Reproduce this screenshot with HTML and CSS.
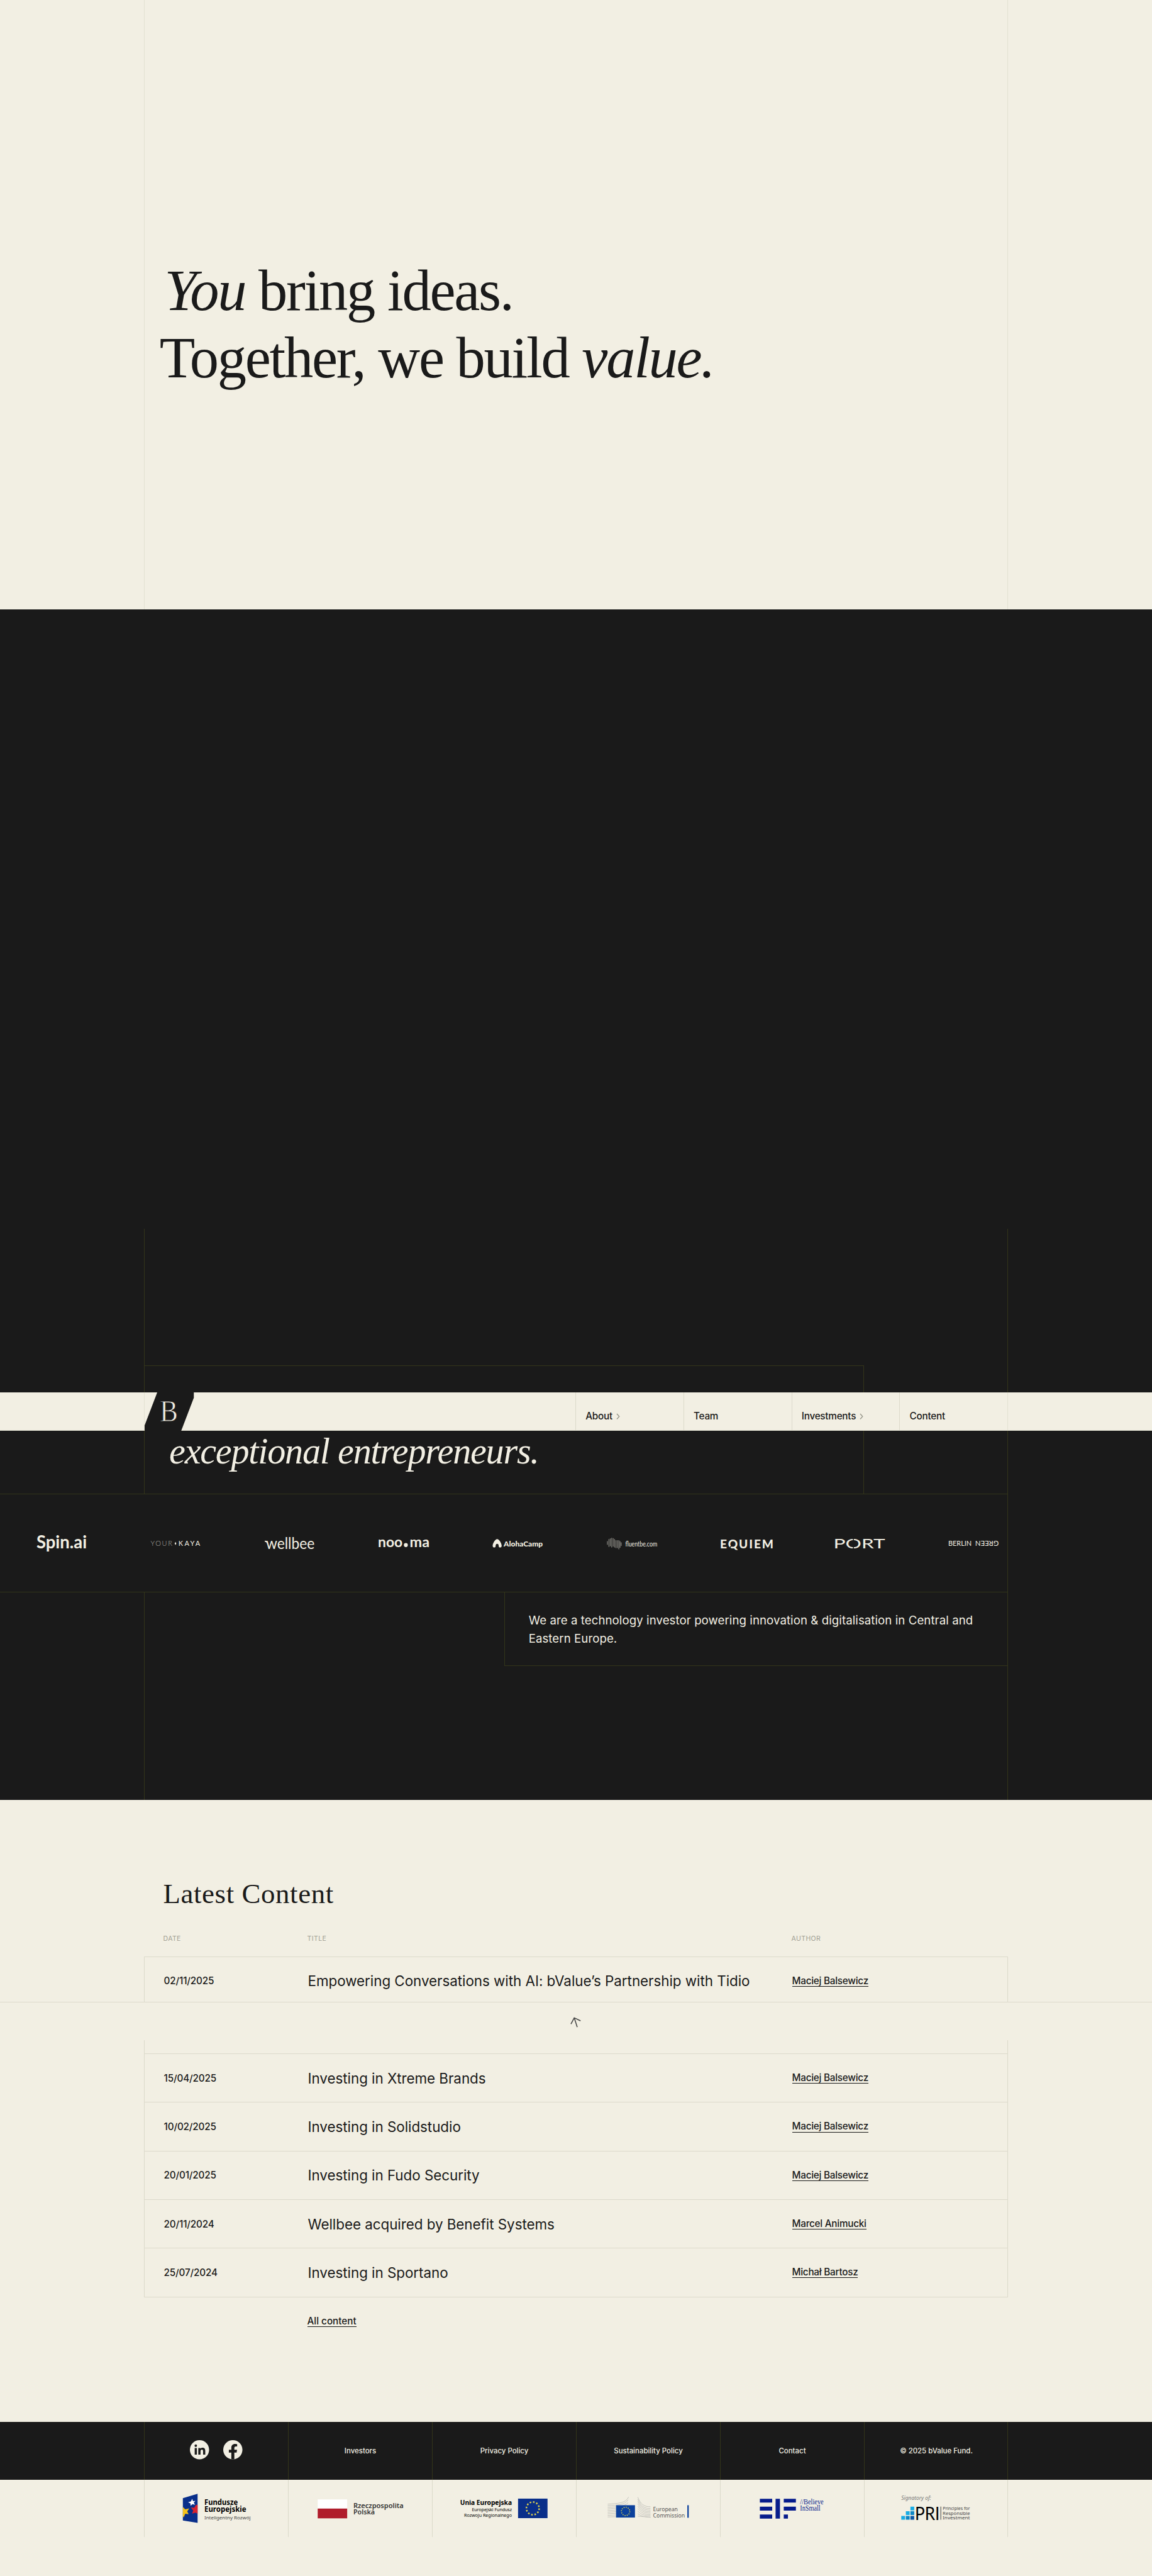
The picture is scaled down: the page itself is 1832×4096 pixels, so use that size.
FILE: index.html
```html
<!DOCTYPE html>
<html lang="en">
<head>
    <meta charset="UTF-8">
    <meta name="viewport" content="width=device-width, initial-scale=1.0">
    <title>bValue Fund</title>
    <link rel="stylesheet" href="styles.css">
</head>
<body>
    <header class="nav">
        <div class="nav-inner">
            <a class="logo" href="#">
                <svg viewBox="0 0 82 64">
                    <polygon points="21,0 82,0 82,9 61,64 0,64 0,55" fill="#1a1a1a"/>
                    <text x="25.5" y="48.5" font-size="50" textLength="30" lengthAdjust="spacingAndGlyphs" fill="#f2efe3" stroke="#1a1a1a" stroke-width="0.9">B</text>
                </svg>
            </a>
            <nav class="menu">
                <a href="#">About <svg class="chevron" viewBox="0 0 7 11"><path d="M1 1l4 4.5-4 4.5"/></svg></a>
                <a href="#">Team</a>
                <a href="#">Investments <svg class="chevron" viewBox="0 0 7 11"><path d="M1 1l4 4.5-4 4.5"/></svg></a>
                <a href="#">Content</a>
            </nav>
        </div>
    </header>

    <section class="hero">
        <div class="hero-inner">
            <h1><span class="line first"><em>You</em> bring ideas.</span><span class="line">Together, we build <em>value.</em></span></h1>
        </div>
    </section>

    <section class="video"></section>

    <section class="about">
        <div class="about-title">
            <h2>exceptional entrepreneurs.</h2>
        </div>
        <div class="marquee">
            <svg viewBox="0 0 84 48"><text class="lato" x="0" y="32" font-size="30" font-weight="700" textLength="84" lengthAdjust="spacingAndGlyphs">Spin.ai</text></svg>
            <svg viewBox="0 0 84 48">
                <text class="lato" x="0.5" y="28.5" font-size="11.5" font-weight="300" opacity=".65" textLength="36">YOUR</text>
                <path d="M42 21.8l1.4 2.6-1.4 2.6-1.4-2.6z"/>
                <text class="lato" x="47" y="28.5" font-size="11.5" textLength="36">KAYA</text>
            </svg>
            <svg viewBox="0 0 84 48">
                <path class="stroke" d="M0 20.500c3 0 4 1 5 4"/>
                <text class="lato" x="2" y="34" font-size="27" textLength="81" lengthAdjust="spacingAndGlyphs">wellbee</text>
            </svg>
            <svg viewBox="0 0 84 48">
                <text class="lato" x="-1" y="30.500" font-size="24" font-weight="700" textLength="41" lengthAdjust="spacingAndGlyphs">noo</text>
                <circle cx="45.500" cy="27" r="3.300"/>
                <text class="lato" x="52" y="30.500" font-size="24" font-weight="700" textLength="33" lengthAdjust="spacingAndGlyphs">ma</text>
            </svg>
            <svg viewBox="0 0 84 48">
                <path d="M8 17c3 0 7.500 7 7.500 11 0 2-1 3-2.600 3s-2.400-1-2.400-3c0-1.600-1-3-2.500-3s-2.500 1.400-2.500 3c0 2-.8 3-2.400 3S.5 30 .5 28c0-4 4.500-11 7.500-11z"/>
                <text class="lato" x="19" y="29.500" font-size="12" font-weight="900" textLength="65" lengthAdjust="spacingAndGlyphs">AlohaCamp</text>
            </svg>
            <svg viewBox="0 0 84 48">
                <path class="bars" d="M1 20.500v6M3.500 17v13M5.800 16v13M8.200 15v16M10.600 15.500v14M12.900 17v14M15.300 19v13M17.700 19v13M20 19v15M22 20.500v11M24 22.500v6"/>
                <text class="lato" x="31" y="29.500" font-size="12" textLength="53" lengthAdjust="spacingAndGlyphs">fluentbe.com</text>
            </svg>
            <svg viewBox="0 0 84 48">
                <text class="lato" x="-1" y="32.300" font-size="20" font-weight="900" textLength="89">EQUIEM</text>
                <path class="cut" d="M15 31.500l6-6"/>
            </svg>
            <svg viewBox="0 0 84 48">
                <text class="lato" x="-1.500" y="32.800" font-size="22" textLength="86" lengthAdjust="spacingAndGlyphs">PORT</text>
                <path class="cut" d="M31.500 15.500v4M31.500 30v5"/>
            </svg>
            <svg viewBox="0 0 84 48">
                <text class="lato" x="0" y="28.500" font-size="12" textLength="39" lengthAdjust="spacingAndGlyphs">BERLIN</text>
                <text class="lato" x="0" y="0" font-size="12" textLength="39" lengthAdjust="spacingAndGlyphs" transform="translate(84 20) rotate(180)">GREEN</text>
            </svg>
        </div>
        <div class="about-text">
            <p>We are a technology investor powering innovation &amp; digitalisation in Central and<br>Eastern Europe.</p>
        </div>
    </section>

    <section class="content">
        <h3>Latest Content</h3>
        <div class="row head">
            <span>Date</span>
            <span>Title</span>
            <span>Author</span>
        </div>
        <div class="table">
            <div class="row">
                <span class="date">02/11/2025</span>
                <a class="title" href="#">Empowering Conversations with AI: bValue’s Partnership with Tidio</a>
                <a class="link" href="#">Maciej Balsewicz</a>
            </div>
            <div class="row"></div>
            <div class="row">
                <span class="date">15/04/2025</span>
                <a class="title" href="#">Investing in Xtreme Brands</a>
                <a class="link" href="#">Maciej Balsewicz</a>
            </div>
            <div class="row">
                <span class="date">10/02/2025</span>
                <a class="title" href="#">Investing in Solidstudio</a>
                <a class="link" href="#">Maciej Balsewicz</a>
            </div>
            <div class="row">
                <span class="date">20/01/2025</span>
                <a class="title" href="#">Investing in Fudo Security</a>
                <a class="link" href="#">Maciej Balsewicz</a>
            </div>
            <div class="row">
                <span class="date">20/11/2024</span>
                <a class="title" href="#">Wellbee acquired by Benefit Systems</a>
                <a class="link" href="#">Marcel Animucki</a>
            </div>
            <div class="row">
                <span class="date">25/07/2024</span>
                <a class="title" href="#">Investing in Sportano</a>
                <a class="link" href="#">Michał Bartosz</a>
            </div>
        </div>
        <a class="link all" href="#">All content</a>
    </section>

    <footer>
        <div class="footer-links">
            <div class="cols">
                <div class="social">
                    <a href="#">
                        <svg viewBox="0 0 32 32">
                            <circle cx="16" cy="16" r="16" fill="#f2efe3"/>
                            <path fill="#1a1a1a" d="M8 13h3.600v11H8zM9.800 7.200a2.100 2.100 0 110 4.200 2.100 2.100 0 010-4.200zM14 13h3.500v1.500c.5-.9 1.700-1.800 3.500-1.800 3.700 0 4.600 2.300 4.600 5.500V24H22v-5.200c0-1.300-.1-3-1.900-3-1.900 0-2.400 1.400-2.400 2.900V24H14z"/>
                        </svg>
                    </a>
                    <a href="#">
                        <svg viewBox="0 0 32 32">
                            <circle cx="16" cy="16" r="16" fill="#f2efe3"/>
                            <path fill="#1a1a1a" d="M13.500 32V20.600H9.400V16h4.100v-3.500c0-4 2.400-6.300 6.100-6.300 1.800 0 3.600.3 3.600.3v4h-2c-2 0-2.700 1.200-2.700 2.500v3H23l-.7 4.600h-3.800V32z"/>
                        </svg>
                    </a>
                </div>
                <a href="#">Investors</a>
                <a href="#">Privacy Policy</a>
                <a href="#">Sustainability Policy</a>
                <a href="#">Contact</a>
                <span>© 2025 bValue Fund.</span>
            </div>
        </div>
        <div class="cols partners">
            <svg viewBox="60 336 720 288">
                <polygon points="252,428 326,406 326,552 252,540" fill="#0a2f8a"/>
                <path fill="#fff" d="M299 431l4 12 12-2-8 9 6 11-13-3-9 8-1-12-12-6 14-4z"/>
                <path fill="#f5c21b" d="M252 472l12 12 20-5-10 15 7 14-17-2-8 19-4-8z"/>
                <path fill="#d8232f" d="M326 462v44l-10-6-18 5 6-15-12-16 17 2 9-15z"/>
                <text x="360" y="462" font-size="37" font-weight="700" textLength="168" lengthAdjust="spacingAndGlyphs">Fundusze</text>
                <text x="360" y="498" font-size="37" font-weight="700" textLength="210" lengthAdjust="spacingAndGlyphs">Europejskie</text>
                <text x="360" y="534" font-size="25" fill="#444" textLength="232" lengthAdjust="spacingAndGlyphs">Inteligentny Rozwój</text>
            </svg>
            <svg viewBox="780 336 720 288">
                <rect x="926" y="434" width="148" height="46" fill="#fff"/>
                <rect x="926" y="480" width="148" height="49" fill="#b01c2b"/>
                <text x="1105" y="477" font-size="34" font-weight="600" fill="#333" textLength="252" lengthAdjust="spacingAndGlyphs">Rzeczpospolita</text>
                <text x="1105" y="510" font-size="34" font-weight="600" fill="#333" textLength="108" lengthAdjust="spacingAndGlyphs">Polska</text>
            </svg>
            <svg viewBox="60 336 720 288">
                <text x="198" y="461" font-size="36" font-weight="700" textLength="260" lengthAdjust="spacingAndGlyphs">Unia Europejska</text>
                <text x="257" y="494" font-size="24" textLength="201" lengthAdjust="spacingAndGlyphs">Europejski Fundusz</text>
                <text x="218" y="523" font-size="24" textLength="240" lengthAdjust="spacingAndGlyphs">Rozwoju Regionalnego</text>
                <rect x="489" y="430" width="148" height="98" fill="#0a2f8a"/>
                <circle class="stars" cx="563" cy="479" r="32"/>
            </svg>
            <svg viewBox="780 336 720 288">
                <path class="berlaymont" d="M936 458c50-4 90-4 105-36M936 466c50-4 85-4 103-30M936 474c50-4 85-4 103-24M936 482c40-4 45-4 45-4M936 490l44-3M936 498l44-3M936 506l44-3M936 514l44-2M936 522l44-1M1087 423c14 32 28 48 64 48M1087 433c14 30 28 47 64 47M1087 444c14 26 28 44 64 44M1087 456c14 22 28 40 64 40M1087 468c14 18 28 35 64 35M1087 480c14 14 28 31 64 31M1087 493c14 12 28 24 64 24M1087 506c14 8 28 17 64 17M1087 518l64 6"/>
                <rect x="978" y="463" width="95" height="62" fill="#0b409c"/>
                <circle class="stars small" cx="1026" cy="494" r="21"/>
                <text x="1164" y="494" font-size="29" fill="#555" textLength="124" lengthAdjust="spacingAndGlyphs">European</text>
                <text x="1164" y="525" font-size="29" fill="#555" textLength="160" lengthAdjust="spacingAndGlyphs">Commission</text>
                <rect x="1336" y="463" width="7" height="63" fill="#0b409c"/>
            </svg>
            <svg viewBox="0 336 720 288">
                <path fill="#061c8c" d="M197 431h62v19h-62zM197 470h62v20h-62zM197 510h62v20h-62zM276 431h22v99h-22zM317 431h61v19h-61zM317 470h61v20h-61zM317 510h21v20h-21z"/>
                <text class="serif" x="399" y="458" font-size="38" fill="#061c8c" textLength="118" lengthAdjust="spacingAndGlyphs">//Believe</text>
                <text class="serif" x="399" y="491" font-size="38" fill="#061c8c" textLength="102" lengthAdjust="spacingAndGlyphs">InSmall</text>
            </svg>
            <svg viewBox="720 336 720 288">
                <text x="904" y="438" font-size="26" font-style="italic" fill="#777" textLength="150" lengthAdjust="spacingAndGlyphs">Signatory of:</text>
                <path fill="#19ace4" d="M904 517h19v19h-19zM927 493h19v19h-19zM950 470h19v19h-19z"/>
                <path fill="#0c86c6" d="M927 517h19v19h-19zM950 493h19v19h-19z"/>
                <path fill="#0c56a4" d="M950 517h19v19h-19z"/>
                <text class="pri" x="973" y="536" font-size="90" textLength="124" lengthAdjust="spacingAndGlyphs">PRI</text>
                <rect x="1101" y="470" width="3" height="66" fill="#333"/>
                <text x="1112" y="487" font-size="23" fill="#444" textLength="137" lengthAdjust="spacingAndGlyphs">Principles for</text>
                <text x="1112" y="511" font-size="23" fill="#444" textLength="137" lengthAdjust="spacingAndGlyphs">Responsible</text>
                <text x="1112" y="535" font-size="23" fill="#444" textLength="137" lengthAdjust="spacingAndGlyphs">Investment</text>
            </svg>
        </div>
    </footer>

    <div class="back-bar">
        <svg viewBox="0 0 18 18"><path d="M11.500 17L6.500 1.500M1 12L6.500 1.500 17 6.500"/></svg>
    </div>
</body>
</html>
```

FILE: styles.css
```css
* {
    box-sizing: border-box;
}

/* 1rem = 10 units of a 1920 wide layout */
html {
    font-size: calc(100vw / 192);
}

body {
    position: relative;
    margin: 0;
    background-color: #f2efe3;
    color: #1a1a1a;
    font-family: Inter, "Liberation Sans", sans-serif;
    font-size: 1.6rem;
}

h1, h2, h3, p {
    margin: 0;
    font-weight: 400;
}

h1, h2, h3 {
    font-family: "Liberation Serif", serif;
}

a {
    color: inherit;
    text-decoration: none;
}

svg {
    display: block;
    overflow: visible;
}

/* Navigation bar, over the sections */
.nav {
    position: absolute;
    z-index: 10;
    top: 232rem;
    left: 0;
    width: 100%;
    height: 6.4rem;
    background-color: #f2efe3;
    border-bottom: 1px solid #dcdacb;
}

.nav-inner {
    display: flex;
    justify-content: space-between;
    height: 100%;
    margin: 0 24rem;
    border-left: 1px solid #e3e1d2;
    border-right: 1px solid #e3e1d2;
}

.logo svg {
    width: 8.2rem;
    height: 6.4rem;
    font-family: "Liberation Serif", serif;
}

.menu {
    display: flex;
}

.menu a {
    display: flex;
    align-items: center;
    width: 18rem;
    padding: 1.6rem 0 0 1.6rem;
    border-left: 1px solid #dcdacb;
    font-size: 1.6rem;
    font-weight: 500;
    letter-spacing: -0.015em;
}

.chevron {
    width: 0.7rem;
    height: 1.1rem;
    margin: 0.2rem 0 0 0.6rem;
    fill: none;
    stroke: #98978b;
    stroke-width: 1.4;
}

/* Hero */
.hero {
    height: 101.6rem;
    padding: 0 24rem;
}

.hero-inner {
    height: 100%;
    padding: 42.9rem 0 0 2.5rem;
    border-left: 1px solid #e3e1d2;
    border-right: 1px solid #e3e1d2;
}

.hero h1 {
    font-size: 9.7rem;
    line-height: 11.2rem;
    letter-spacing: -0.0245em;
}

.line {
    display: block;
}

.line.first {
    padding-left: 0.8rem;
}

.video {
    height: 103.2rem;
    background-color: #1a1a1a;
}

/* About */
.about {
    position: relative;
    height: 95.2rem;
    padding-top: 22.7rem;
    background-color: #1a1a1a;
    color: #f2efe3;
}

.about::before {
    content: "";
    position: absolute;
    top: 0;
    bottom: 0;
    left: 24rem;
    right: 24rem;
    border-left: 1px solid #33351a;
    border-right: 1px solid #33351a;
}

.about-title {
    width: 120rem;
    height: 21.4rem;
    margin-left: 24rem;
    padding: 10.7rem 0 0 4.2rem;
    border-top: 1px solid #33351a;
    border-right: 1px solid #33351a;
}

.about-title h2 {
    font-size: 6.1rem;
    font-style: italic;
    line-height: 7.2rem;
    letter-spacing: -0.021em;
}

.marquee {
    position: relative;
    display: flex;
    align-items: center;
    gap: 10.6rem;
    width: 168rem;
    height: 16.5rem;
    padding-left: 6.1rem;
    background-color: #1a1a1a;
    border: 1px solid #33351a;
    border-left: 0;
}

.marquee svg {
    flex: none;
    width: 8.4rem;
    height: 4.8rem;
    fill: #f2efe3;
}

.lato {
    font-family: Lato, sans-serif;
}

.marquee .stroke {
    fill: none;
    stroke: #f2efe3;
    stroke-width: 1.8;
}

/* gaps in the letters of a wordmark */
.cut {
    stroke: #1a1a1a;
    stroke-width: 1.6;
}

.bars {
    stroke: #b5b3aa;
    stroke-width: 0.9;
}

.about-text {
    width: 84rem;
    height: 12.2rem;
    margin-left: 84rem;
    padding: 3.1rem 0 0 4rem;
    border-left: 1px solid #33351a;
    border-bottom: 1px solid #33351a;
    font-size: 1.95rem;
    line-height: 3rem;
    letter-spacing: 0.005em;
}

/* Latest content */
.content {
    height: 103.6rem;
    padding: 13.3rem 24rem 0;
}

.content h3 {
    padding-left: 3.2rem;
    font-size: 4.7rem;
    line-height: 4.8rem;
    letter-spacing: 0.0136em;
}

.row {
    display: grid;
    grid-template-columns: 24rem 80.7rem auto;
    align-items: center;
    justify-items: start;
    height: 8.1rem;
    padding-left: 3.2rem;
}

.row.head {
    align-items: end;
    height: 7.9rem;
    padding-bottom: 2.3rem;
    color: #a19f93;
    font-size: 1.1rem;
    letter-spacing: 0.04em;
    text-transform: uppercase;
}

.table {
    border: 1px solid #dcdacb;
    border-top: 0;
}

.table .row {
    border-top: 1px solid #dcdacb;
}

.date {
    font-weight: 500;
    letter-spacing: -0.01em;
}

.title {
    font-size: 2.35rem;
    letter-spacing: -0.002em;
}

.link {
    border-bottom: 1px solid #1a1a1a;
    font-weight: 500;
    line-height: 1.8rem;
    letter-spacing: -0.015em;
}

.all {
    display: inline-block;
    margin: 3.1rem 0 0 27.2rem;
    letter-spacing: 0;
}

/* Bar with the cursor arrow, over the table */
.back-bar {
    position: absolute;
    top: 333.6rem;
    left: 0;
    display: flex;
    justify-content: center;
    width: 100%;
    height: 6.4rem;
    padding-top: 2.4rem;
    background-color: #f2efe3;
    border-top: 1px solid #dcdacb;
}

.back-bar svg {
    width: 1.8rem;
    height: 1.8rem;
    fill: none;
    stroke: #444;
    stroke-width: 1.6;
}

/* Footer */
.footer-links {
    background-color: #1a1a1a;
    color: #f2efe3;
    font-size: 1.2rem;
    font-weight: 500;
}

.cols {
    display: grid;
    grid-template-columns: repeat(6, 24rem);
    height: 9.6rem;
    margin: 0 24rem;
    border-right: 1px solid #33351a;
}

.cols > * {
    display: flex;
    align-items: center;
    justify-content: center;
    border-left: 1px solid #33351a;
}

.social {
    gap: 2.4rem;
    padding-bottom: 0.4rem;
}

.social svg {
    width: 3.2rem;
    height: 3.2rem;
}

.partners {
    margin-bottom: 6.4rem;
    border-color: #dcdacb;
}

.partners svg {
    width: 24rem;
    height: 9.6rem;
    border-color: #dcdacb;
    font-family: "Noto Sans", sans-serif;
}

.partners .serif {
    font-family: "Liberation Serif", serif;
}

.partners .pri {
    font-family: Lato, sans-serif;
}

.berlaymont {
    fill: none;
    stroke: #c4c3bc;
    stroke-width: 3;
}

.stars {
    fill: none;
    stroke: #d9cf4e;
    stroke-width: 8;
    stroke-dasharray: 8 8.755;
}

.stars.small {
    stroke-width: 5;
    stroke-dasharray: 5 5.996;
}
```
